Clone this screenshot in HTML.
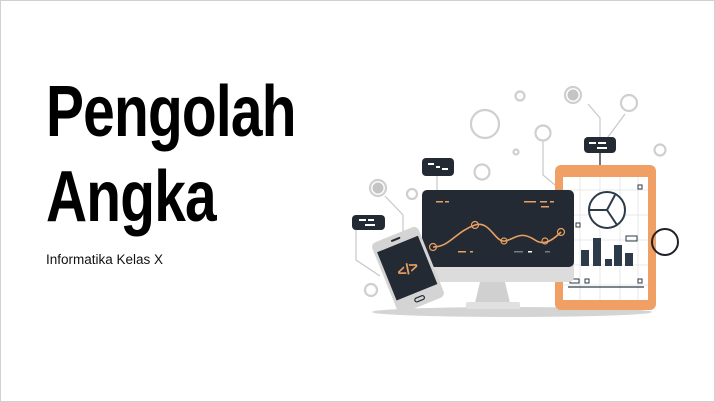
<!DOCTYPE html>
<html><head><style>
html,body{margin:0;padding:0;background:#fff}
.wrap{position:relative;width:713px;height:400px;border:1px solid #d0d0d0;overflow:hidden;background:#fff}
.t{position:absolute;left:45px;font-family:"Liberation Sans",sans-serif;font-weight:bold;font-size:72px;color:#000;transform-origin:0 0;white-space:nowrap;letter-spacing:-1px}
.s{position:absolute;left:45px;top:251px;font-family:"Liberation Sans",sans-serif;font-size:13.5px;color:#111}
</style></head><body><div class="wrap">
<div class="t" style="top:70px;transform:scaleX(0.79)">Pengolah</div>
<div class="t" style="top:155px;transform:scaleX(0.79)">Angka</div>
<div class="s">Informatika Kelas X</div>
<svg width="715" height="402" style="position:absolute;left:-1px;top:-1px">
<g fill="none" stroke="#c8c8c8" stroke-width="1.2">
<polyline points="600,137 600,118 588,104"/>
<polyline points="608,137 625,114"/>
<polyline points="543,141 543,175 555,185"/>
<polyline points="356,229 356,260 380,276"/>
<polyline points="385,196 403,215 403,238"/>
<line x1="437" y1="176" x2="437" y2="190"/>
</g>
<ellipse cx="512" cy="312" rx="140" ry="5" fill="#d4d4d4"/>
<g fill="none" stroke="#cfcfcf" stroke-width="2.2">
<circle cx="485" cy="124" r="14"/><circle cx="629" cy="103" r="8"/><circle cx="520" cy="96" r="4.5"/>
<circle cx="543" cy="133" r="7.5"/><circle cx="516" cy="152" r="2.5"/><circle cx="482" cy="172" r="7.5"/>
<circle cx="412" cy="194" r="5"/><circle cx="660" cy="150" r="5.5"/>
<circle cx="371" cy="290" r="6"/><circle cx="573" cy="95" r="8"/><circle cx="378" cy="188" r="8"/>
</g>
<circle cx="573" cy="95" r="5.5" fill="#c4c4c4"/><circle cx="378" cy="188" r="5.5" fill="#c4c4c4"/>
<!-- tablet -->
<rect x="555" y="165" width="101" height="145" rx="6" fill="#f0a064"/>
<rect x="563" y="177" width="85" height="123" fill="#fff"/>
<g stroke="#e2e2e2" stroke-width="0.8">
<line x1="563" y1="190" x2="648" y2="190"/><line x1="563" y1="215" x2="648" y2="215"/><line x1="563" y1="240" x2="648" y2="240"/><line x1="563" y1="265" x2="648" y2="265"/><line x1="563" y1="285" x2="648" y2="285"/>
<line x1="580" y1="177" x2="580" y2="300"/><line x1="600" y1="177" x2="600" y2="300"/><line x1="620" y1="177" x2="620" y2="300"/><line x1="638" y1="177" x2="638" y2="300"/>
</g>
<circle cx="607" cy="210" r="18" fill="#fff" stroke="#2d3a4a" stroke-width="2"/>
<path d="M607 210 L589 210 M607 210 L615 195 M607 210 L617 225" stroke="#2d3a4a" stroke-width="2"/>
<g fill="#2d3a4a"><rect x="581" y="250" width="8" height="16"/><rect x="593" y="238" width="8" height="28"/><rect x="605" y="259" width="7" height="7"/><rect x="614" y="245" width="8" height="21"/><rect x="625" y="253" width="8" height="13"/></g>
<line x1="568" y1="287" x2="644" y2="287" stroke="#2d3a4a" stroke-width="1.2"/>
<g fill="none" stroke="#2d3a4a" stroke-width="1"><rect x="638" y="185" width="4" height="4"/><rect x="576" y="223" width="4" height="4"/><rect x="626" y="236" width="11" height="5"/><rect x="570" y="279" width="9" height="4"/><rect x="585" y="279" width="4" height="4"/><rect x="638" y="279" width="4" height="4"/></g>
<circle cx="665" cy="242" r="13" fill="none" stroke="#1e2228" stroke-width="2"/>
<!-- monitor -->
<path d="M480 282 L505 282 L510 303 L475 303 Z" fill="#d0d0d0"/>
<rect x="466" y="302" width="54" height="7" rx="2" fill="#e0e0e0"/>
<rect x="422" y="190" width="152" height="92" rx="5" fill="#dcdcdc"/>
<rect x="422" y="190" width="152" height="77" rx="5" fill="#232a33"/>
<path d="M433 247 C450 247 455 232 475 225 C490 220 495 243 505 241 C515 239 520 230 535 240 C545 247 555 238 561 232" fill="none" stroke="#e9a062" stroke-width="1.6"/>
<g fill="none" stroke="#e9a062" stroke-width="1.2"><circle cx="433" cy="247" r="3.5"/><circle cx="475" cy="225" r="3.5"/><circle cx="504" cy="241" r="3"/><circle cx="545" cy="241" r="3"/><circle cx="561" cy="232" r="3.5"/></g>
<g fill="#e9a062"><rect x="436" y="201" width="7" height="1.5"/><rect x="445" y="201" width="4" height="1.5"/><rect x="524" y="201" width="12" height="1.5"/><rect x="540" y="201" width="7" height="1.5"/><rect x="550" y="201" width="4" height="1.5"/><rect x="541" y="206" width="8" height="1.5"/><rect x="458" y="251" width="8" height="1.5"/><rect x="470" y="251" width="3" height="1.5"/></g>
<g fill="#6f7c8a"><rect x="514" y="251" width="9" height="1.5"/><rect x="545" y="251" width="5" height="1.5"/></g><rect x="528" y="251" width="4" height="1.5" fill="#fff"/>
<!-- phone -->
<g transform="translate(408,270) rotate(-22)">
<rect x="-25" y="-38" width="50" height="76" rx="5" fill="#d4d4d4"/>
<rect x="-22" y="-28" width="44" height="52" fill="#232a33"/>
<rect x="-5" y="-34" width="10" height="2" rx="1" fill="#232a33"/>
<rect x="-5" y="29" width="10" height="4" rx="2" fill="none" stroke="#232a33" stroke-width="1.2"/>
<text x="0" y="4" font-family="Liberation Sans,sans-serif" font-size="15" fill="#e9a062" text-anchor="middle" font-weight="bold">&lt;/&gt;</text>
</g>
<!-- bubbles -->
<g fill="#232a33"><rect x="352" y="215" width="33" height="15" rx="4"/><rect x="422" y="158" width="32" height="18" rx="4"/><rect x="584" y="137" width="32" height="16" rx="4"/></g>
<g fill="#fff"><rect x="359" y="219" width="7" height="2"/><rect x="368" y="219" width="6" height="2"/><rect x="365" y="224" width="10" height="2"/>
<rect x="428" y="163" width="6" height="2"/><rect x="436" y="166" width="4" height="2"/><rect x="442" y="168" width="6" height="2"/>
<rect x="589" y="142" width="7" height="2"/><rect x="598" y="142" width="8" height="2"/><rect x="597" y="147" width="10" height="2"/></g>
<line x1="600" y1="153" x2="600" y2="165" stroke="#232a33" stroke-width="1.3"/>
</svg>
</div></body></html>
